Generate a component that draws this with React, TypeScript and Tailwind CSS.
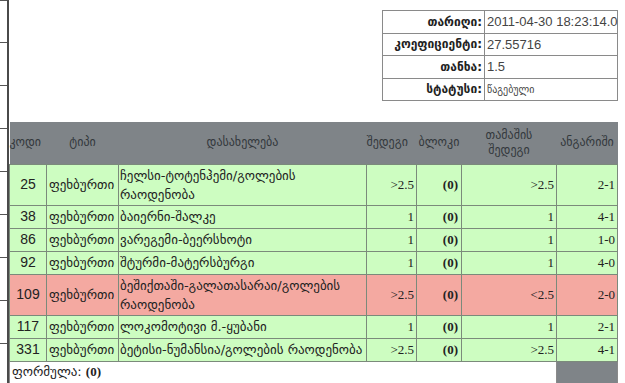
const GEO = "font-['DejaVu_Sans',sans-serif]";
const SERIF = "font-['Liberation_Serif','DejaVu_Sans',serif]";
const SANS = "font-['Liberation_Sans','DejaVu_Sans',sans-serif]";

type Bet = {
  code: string;
  type: string;
  name: string;
  result: string;
  game: string;
  score: string;
  lost?: boolean;
  tall?: boolean;
};

const BETS: Bet[] = [
  { code: '25', type: 'ფეხბურთი', name: 'ჩელსი-ტოტენჰემი/გოლების რაოდენობა', result: '>2.5', game: '>2.5', score: '2-1', tall: true },
  { code: '38', type: 'ფეხბურთი', name: 'ბაიერნი-შალკე', result: '1', game: '1', score: '4-1' },
  { code: '86', type: 'ფეხბურთი', name: 'ვარეგემი-ბეერსხოტი', result: '1', game: '1', score: '1-0' },
  { code: '92', type: 'ფეხბურთი', name: 'შტურმი-მატერსბურგი', result: '1', game: '1', score: '4-0' },
  { code: '109', type: 'ფეხბურთი', name: 'ბეშიქთაში-გალათასარაი/გოლების რაოდენობა', result: '>2.5', game: '<2.5', score: '2-0', lost: true, tall: true },
  { code: '117', type: 'ფეხბურთი', name: 'ლოკომოტივი მ.-ყუბანი', result: '1', game: '1', score: '2-1' },
  { code: '331', type: 'ფეხბურთი', name: 'ბეტისი-ნუმანსია/გოლების რაოდენობა', result: '>2.5', game: '>2.5', score: '4-1' },
];

const INFO = [
  ['თარიღი:', '2011-04-30 18:23:14.0'],
  ['კოეფიციენტი:', '27.55716'],
  ['თანხა:', '1.5'],
  ['სტატუსი:', 'წაგებული'],
];

export default function App() {
  return (
    <div className="flex w-[625px] h-[383px] overflow-hidden bg-white text-[#222]">
      {/* clipped side menu */}
      <div className="w-[9px] shrink-0 border-r-2 border-[#4a4a4a] flex flex-col">
        {Array.from({ length: 9 }).map((_, i) => (
          <div key={i} className={`h-[43px] shrink-0 border-b border-[#555] ${i === 0 ? 'border-t' : ''}`} />
        ))}
      </div>

      <div className="flex-1 flex flex-col pr-[8px]">
        <table className="ml-auto mt-[10px] w-[236px] table-fixed border-collapse">
          <colgroup>
            <col className="w-[102px]" />
            <col />
          </colgroup>
          <tbody>
            {INFO.map(([k, v]) => (
              <tr key={k} className="h-[22.5px]">
                <td className={`border border-[#8a8a8a] px-[2px] text-right text-[12px] font-bold ${GEO}`}>{k}</td>
                <td className={`border border-[#8a8a8a] px-[2px] text-[#444] whitespace-nowrap ${k === 'სტატუსი:' ? GEO + ' text-[10px]' : SANS + ' text-[13px]'}`}>{v}</td>
              </tr>
            ))}
          </tbody>
        </table>

        <table className="mt-[21px] w-[608px] table-fixed border-collapse">
          <colgroup>
            <col className="w-[37px]" />
            <col className="w-[72px]" />
            <col className="w-[248px]" />
            <col className="w-[50px]" />
            <col className="w-[45px]" />
            <col className="w-[95px]" />
            <col className="w-[61px]" />
          </colgroup>
          <thead>
            <tr className={`h-[42px] bg-[#7f8488] text-[#33383c] text-[12px] leading-[15px] ${GEO}`}>
              <th className="font-normal text-left whitespace-nowrap">კოდი</th>
              <th className="font-normal text-center">ტიპი</th>
              <th className="font-normal text-center">დასახელება</th>
              <th className="font-normal text-left whitespace-nowrap">შედეგი</th>
              <th className="font-normal text-center whitespace-nowrap">ბლოკი</th>
              <th className="font-normal text-center">თამაშის<br />შედეგი</th>
              <th className="font-normal text-center whitespace-nowrap">ანგარიში</th>
            </tr>
          </thead>
          <tbody>
            {BETS.map(b => (
              <tr key={b.code} className={`${b.lost ? 'bg-[#f4a9a1]' : 'bg-[#cdfdc1]'} ${b.tall ? 'h-[41px]' : 'h-[23px]'}`}>
                <td className={`border border-[#7b8a7b] text-center text-[14px] ${SANS}`}>{b.code}</td>
                <td className={`border border-[#7b8a7b] pl-[2px] text-[13px] whitespace-nowrap overflow-hidden ${GEO}`}>{b.type}</td>
                <td className={`border border-[#7b8a7b] pl-[1px] text-[13px] leading-[19px] ${b.tall ? '' : 'whitespace-nowrap overflow-hidden'} ${GEO}`}>{b.name}</td>
                <td className={`border border-[#7b8a7b] pr-[2px] text-right text-[13px] ${SERIF}`}>{b.result}</td>
                <td className={`border border-[#7b8a7b] pr-[3px] text-right text-[13px] font-bold ${SERIF}`}>(0)</td>
                <td className={`border border-[#7b8a7b] pr-[2px] text-right text-[13px] ${SERIF}`}>{b.game}</td>
                <td className={`border border-[#7b8a7b] pr-[2px] text-right text-[13px] ${SERIF}`}>{b.score}</td>
              </tr>
            ))}
            <tr className="h-[22px]">
              <td colSpan={6} className={`border border-[#8a8a8a] pl-[2px] text-[13px] ${GEO}`}>
                ფორმულა: <span className={`font-bold text-[13px] ${SERIF}`}>(0)</span>
              </td>
              <td className="border border-[#8a8a8a] bg-[#7f8488]" />
            </tr>
          </tbody>
        </table>
      </div>
    </div>
  );
}
